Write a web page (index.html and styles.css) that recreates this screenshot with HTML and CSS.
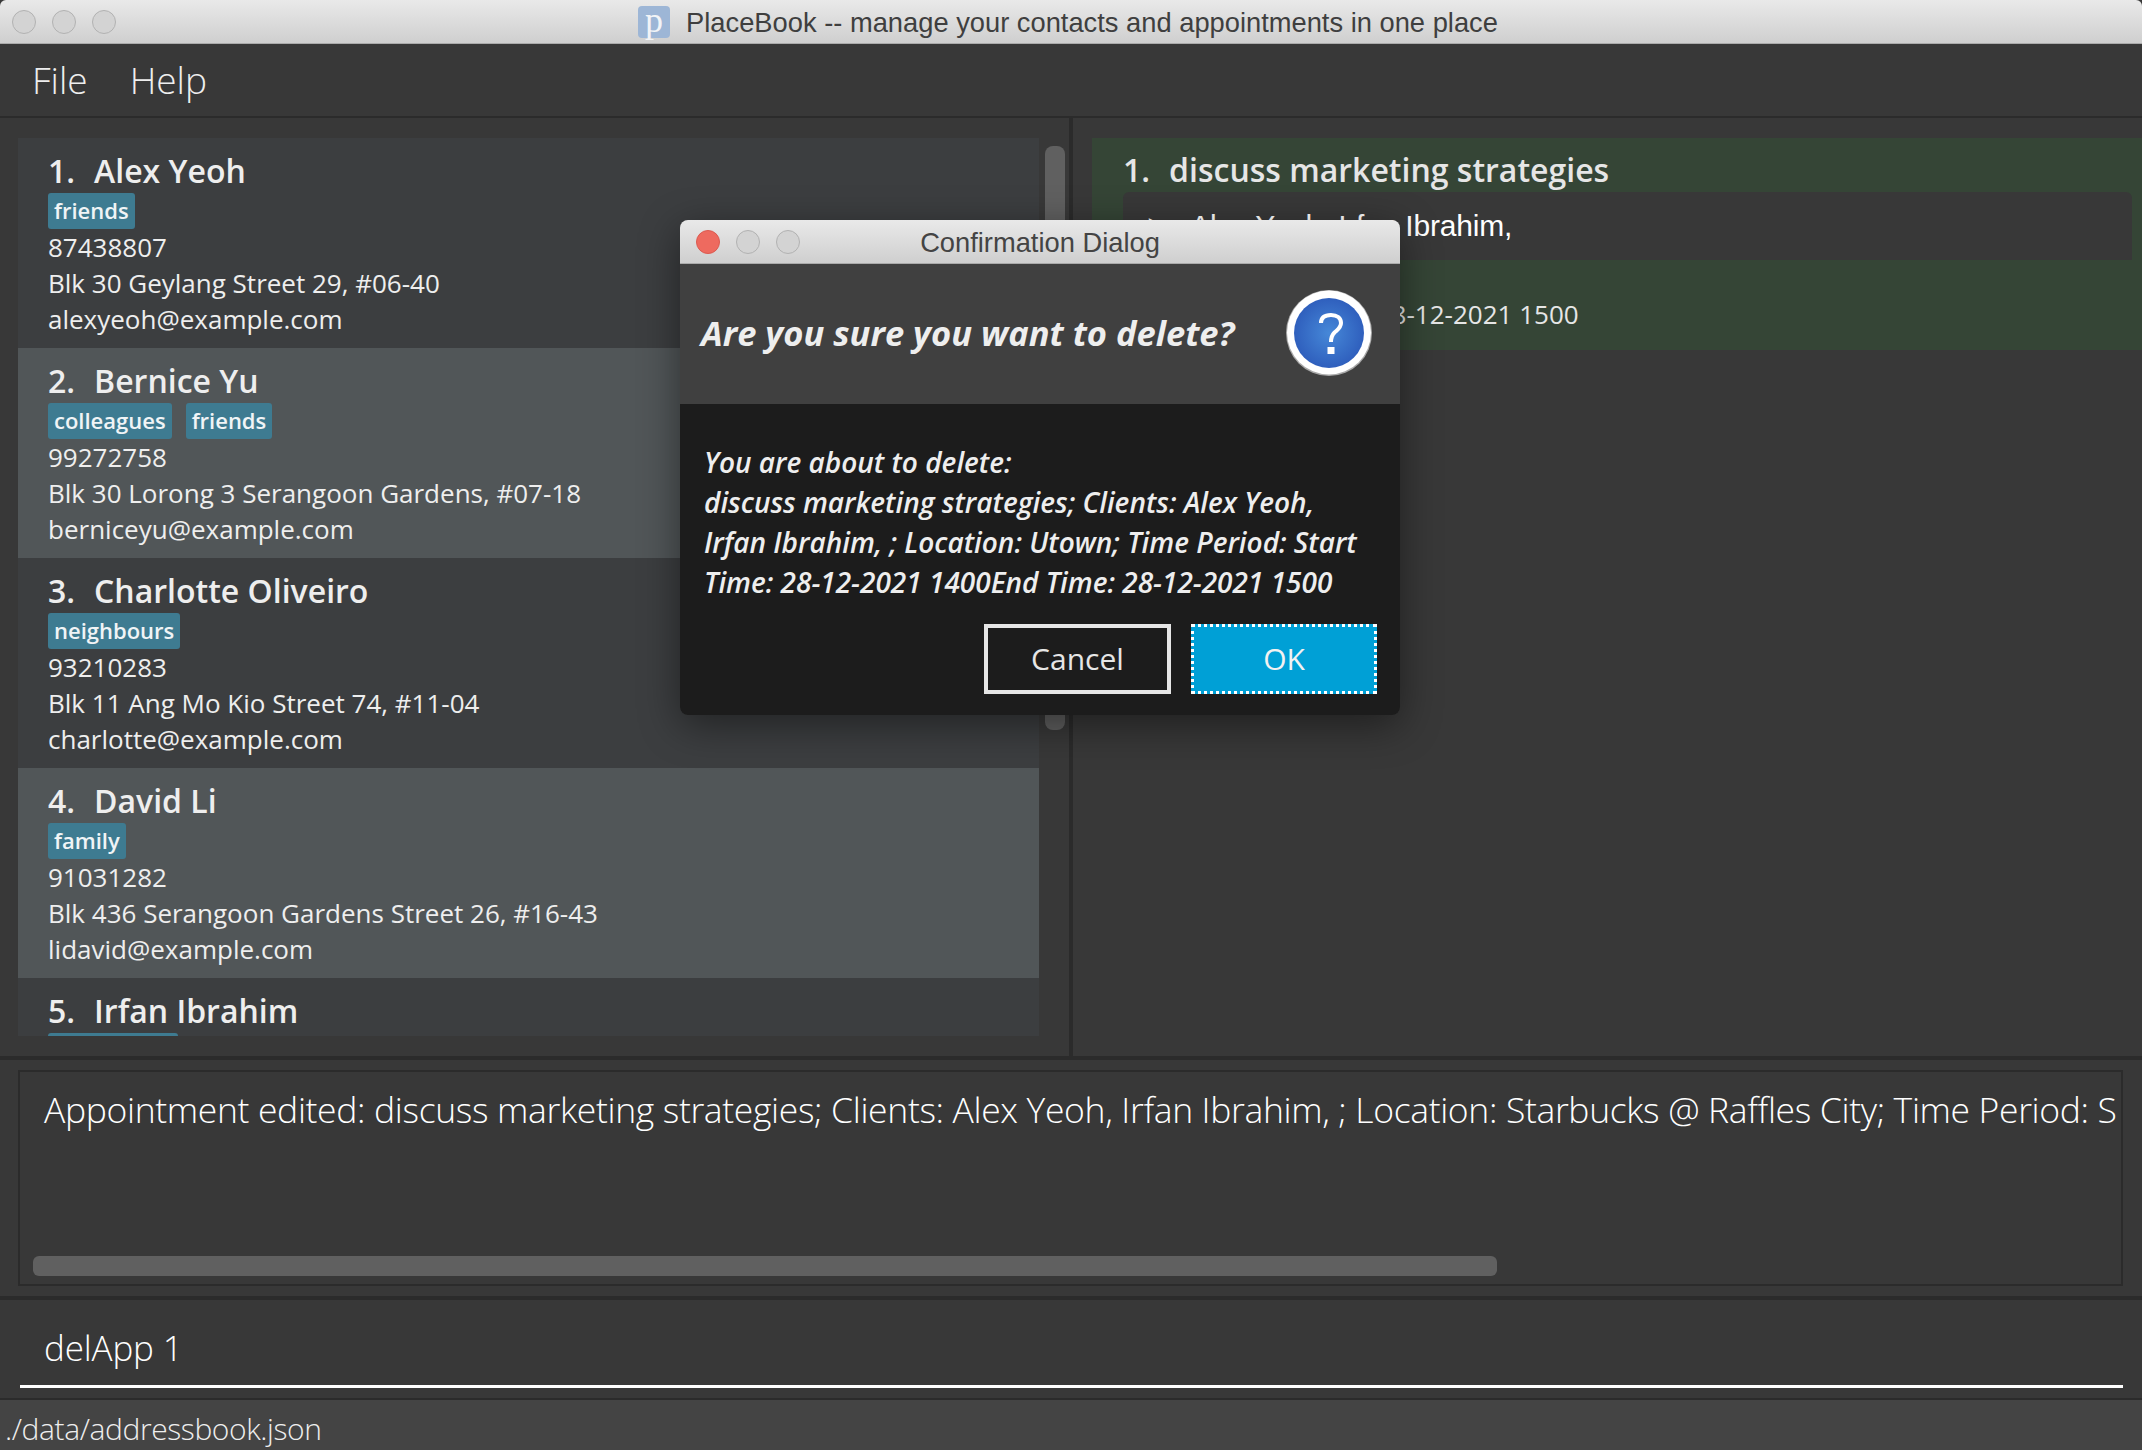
FILE: index.html
```html
<!DOCTYPE html>
<html lang="en">
<head>
<meta charset="utf-8">
<title>PlaceBook</title>
<link rel="stylesheet" href="styles.css">
</head>
<body>
<div class="window">
  <header class="titlebar">
    <div class="lights">
      <span class="light"></span><span class="light"></span><span class="light"></span>
    </div>
    <span class="app-icon">p</span>
    <span class="title-text">PlaceBook -- manage your contacts and appointments in one place</span>
  </header>
  <nav class="menubar"><span>File</span><span>Help</span></nav>
  <main class="split">
    <section class="left">
      <div class="list">
        <article class="card">
          <div class="name"><span class="index">1.</span>Alex Yeoh</div>
          <div class="tags"><span class="tag">friends</span></div>
          <div class="line">87438807</div>
          <div class="line">Blk 30 Geylang Street 29, #06-40</div>
          <div class="line">alexyeoh@example.com</div>
        </article>
        <article class="card alt">
          <div class="name"><span class="index">2.</span>Bernice Yu</div>
          <div class="tags"><span class="tag">colleagues</span><span class="tag">friends</span></div>
          <div class="line">99272758</div>
          <div class="line">Blk 30 Lorong 3 Serangoon Gardens, #07-18</div>
          <div class="line">berniceyu@example.com</div>
        </article>
        <article class="card">
          <div class="name"><span class="index">3.</span>Charlotte Oliveiro</div>
          <div class="tags"><span class="tag">neighbours</span></div>
          <div class="line">93210283</div>
          <div class="line">Blk 11 Ang Mo Kio Street 74, #11-04</div>
          <div class="line">charlotte@example.com</div>
        </article>
        <article class="card alt">
          <div class="name"><span class="index">4.</span>David Li</div>
          <div class="tags"><span class="tag">family</span></div>
          <div class="line">91031282</div>
          <div class="line">Blk 436 Serangoon Gardens Street 26, #16-43</div>
          <div class="line">lidavid@example.com</div>
        </article>
        <article class="card">
          <div class="name"><span class="index">5.</span>Irfan Ibrahim</div>
          <div class="tags"><span class="tag tag-clipped"></span></div>
        </article>
      </div>
      <div class="vscroll"></div>
    </section>
    <section class="right">
      <article class="appt">
        <div class="appt-title"><span class="index">1.</span>discuss marketing strategies</div>
        <div class="clients"><span class="chevron">&gt;</span><span>Alex Yeoh, Irfan Ibrahim,</span></div>
        <div class="appt-line">Utown</div>
        <div class="appt-line appt-time">28-12-2021 1400 - 28-12-2021 1500</div>
      </article>
    </section>
  </main>
  <section class="result-pane">
    <div class="result-box">
      <div class="result-text">Appointment edited: discuss marketing strategies; Clients: Alex Yeoh, Irfan Ibrahim, ; Location: Starbucks @ Raffles City; Time Period: Start Time: 28-12-2021 1400 End Time: 28-12-2021 1500</div>
      <div class="hscroll"></div>
    </div>
  </section>
  <section class="command"><div class="command-input">delApp 1</div></section>
  <footer class="status">./data/addressbook.json</footer>
</div>

<div class="dialog">
  <div class="dialog-bar">
    <div class="lights dialog-lights">
      <span class="light red"></span><span class="light"></span><span class="light"></span>
    </div>
    <span class="dialog-title">Confirmation Dialog</span>
  </div>
  <div class="dialog-head">
    <span class="dialog-question">Are you sure you want to delete?</span>
    <svg class="q-icon" viewBox="0 0 86 86" width="86" height="86" aria-hidden="true">
      <defs>
        <radialGradient id="qg" cx="50%" cy="50%" r="50%">
          <stop offset="0%" stop-color="#4688d8"/>
          <stop offset="100%" stop-color="#2f5fbd"/>
        </radialGradient>
      </defs>
      <circle cx="43" cy="43" r="43" fill="#a9a9a9"/>
      <circle cx="43" cy="42.500" r="42" fill="#fff"/>
      <circle cx="43" cy="43" r="35" fill="url(#qg)"/>
      <path d="M35 33C35 27 39 25 45 25C51 25 55 28 55 33C55 38 51 40 48.500 42.500C46 45 45 47 45 52" fill="none" stroke="#fff" stroke-width="4"/>
      <rect x="41.500" y="57" width="7" height="7" fill="#fff"/>
    </svg>
  </div>
  <div class="dialog-body">
    <p class="dialog-msg">You are about to delete:<br>discuss marketing strategies; Clients: Alex Yeoh,<br>Irfan Ibrahim, ; Location: Utown; Time Period: Start<br>Time: 28-12-2021 1400End Time: 28-12-2021 1500</p>
    <div class="dialog-actions">
      <button class="btn">Cancel</button>
      <button class="btn primary">OK</button>
    </div>
  </div>
</div>
</body>
</html>
```
FILE: styles.css
```css
* { box-sizing: border-box; }
html, body { margin: 0; height: 100%; }
body {
  background: #fff;
  overflow: hidden;
  font-family: "Open Sans", "Liberation Sans", sans-serif;
  color: #eee;
}
.window {
  width: 2142px;
  height: 1450px;
  display: flex;
  flex-direction: column;
  background: #383838;
}
.titlebar {
  position: relative;
  flex: 0 0 44px;
  display: flex;
  align-items: center;
  justify-content: center;
  gap: 16px;
  padding-right: 6px;
  background: linear-gradient(#e9e9e9, #cfcfcf);
  border-bottom: 1px solid #ababab;
  border-radius: 6px 6px 0 0;
  font-family: "Liberation Sans", sans-serif;
  color: #3f3f3f;
  font-size: 27.300px;
}
.title-text { padding-top: 2px; }
.lights {
  position: absolute;
  left: 12px;
  top: 10px;
  display: flex;
  gap: 16px;
}
.light {
  width: 24px;
  height: 24px;
  border-radius: 50%;
  border: 1px solid #b2b2b2;
  background: #d3d3d3;
}
.light.red { background: #ee6a5f; border-color: #dc5a50; }
.app-icon {
  width: 32px;
  height: 32px;
  border-radius: 4px;
  background: #9db6d6;
  color: #f2f4f7;
  font: 36px/28px "Liberation Serif", serif;
  text-align: center;
}
.menubar {
  flex: 0 0 74px;
  display: flex;
  align-items: center;
  gap: 42px;
  padding: 0 0 2px 32px;
  border-bottom: 2px solid #2b2b2b;
  font-size: 37px;
  font-weight: 300;
}
.split {
  flex: 0 0 942px;
  display: flex;
  border-bottom: 4px solid #2b2b2b;
}
.left {
  flex: 0 0 1073px;
  display: flex;
  align-items: flex-start;
  padding: 20px 4px 0 18px;
  border-right: 4px solid #2b2b2b;
}
.list {
  flex: 0 0 1021px;
  height: 898px;
  overflow: hidden;
}
.card {
  height: 210px;
  padding: 12px 30px 0;
  background: #3c3e40;
}
.card.alt { background: #515658; }
.name {
  font-size: 32px;
  line-height: 42px;
  font-weight: 600;
  color: #eee;
}
.index { margin-right: 19px; }
.tags {
  display: flex;
  gap: 14px;
  margin-top: 1px;
}
.tag {
  height: 36px;
  padding: 0 6px;
  border-radius: 3px;
  background: #3e7b91;
  color: #f0f4f6;
  font-size: 22px;
  font-weight: 600;
  line-height: 35px;
}
.tag-clipped { width: 130px; }
.line {
  font-size: 26px;
  line-height: 36px;
  color: #eee;
}
.vscroll {
  flex: 0 0 20px;
  height: 584px;
  margin: 8px 0 0 6px;
  border-radius: 8px;
  background: #606060;
}
.right {
  flex: 1;
  padding-top: 20px;
  padding-left: 19px;
}
.appt {
  height: 212px;
  padding: 11px 10px 0 31px;
  background: #354536;
}
.appt-title {
  font-size: 32px;
  line-height: 42px;
  font-weight: 600;
  color: #e6e6e6;
}
.clients {
  display: flex;
  align-items: center;
  gap: 24px;
  height: 68px;
  margin-top: 1px;
  padding: 0 0 0 24px;
  border-radius: 6px 6px 0 0;
  background: #383838;
  font-family: "Liberation Sans", sans-serif;
  font-size: 30px;
  letter-spacing: -.2px;
  color: #fff;
}
.chevron {
  font-family: "Open Sans", sans-serif;
  font-size: 34px;
  font-weight: 300;
}
.appt-line {
  font-size: 26px;
  line-height: 36px;
  color: #e6e6e6;
}
.appt-time { padding-left: 30px; }
.result-pane {
  flex: 0 0 240px;
  padding: 10px 19px 10px 18px;
  border-bottom: 4px solid #2b2b2b;
}
.result-box {
  height: 100%;
  display: flex;
  flex-direction: column;
  justify-content: space-between;
  padding: 14px 5px 8px 13px;
  border: 2px solid #2b2b2b;
  overflow: hidden;
}
.result-text {
  padding-left: 11px;
  font-size: 35.500px;
  font-weight: 300;
  letter-spacing: -.35px;
  line-height: 46px;
  color: #fff;
  white-space: nowrap;
  overflow: hidden;
}
.hscroll {
  width: 1464px;
  height: 20px;
  border-radius: 6px;
  background: #606060;
}
.command {
  flex: 0 0 100px;
  padding: 0 19px 10px 20px;
  border-bottom: 2px solid #2b2b2b;
}
.command-input {
  height: 88px;
  padding: 23px 0 0 24px;
  border-bottom: 3px solid #fff;
  font-size: 35px;
  font-weight: 300;
  letter-spacing: -.15px;
  line-height: 50px;
  color: #fff;
}
.status {
  flex: 1;
  padding: 6px 0 0 5px;
  background: #444;
  font-size: 30px;
  font-weight: 300;
  letter-spacing: -.4px;
  line-height: 46px;
  color: #eee;
}
.dialog {
  position: absolute;
  left: 680px;
  top: 220px;
  width: 720px;
  height: 495px;
  display: flex;
  flex-direction: column;
  border-radius: 8px;
  box-shadow: 0 10px 40px rgba(0, 0, 0, .45);
}
.dialog-bar {
  position: relative;
  flex: 0 0 44px;
  display: flex;
  align-items: center;
  justify-content: center;
  background: linear-gradient(#e9e9e9, #cfcfcf);
  border-bottom: 1px solid #ababab;
  border-radius: 8px 8px 0 0;
  font-family: "Liberation Sans", sans-serif;
  color: #444;
  font-size: 27.300px;
}
.dialog-title { padding-top: 2px; }
.dialog-lights { left: 16px; }
.dialog-head {
  flex: 0 0 140px;
  display: flex;
  align-items: center;
  justify-content: space-between;
  padding: 0 28px 2px 21px;
  background: #404040;
}
.dialog-question {
  padding-bottom: 2px;
  font-size: 34.500px;
  font-weight: 700;
  font-style: italic;
  color: #eee;
}
.dialog-body {
  flex: 1;
  display: flex;
  flex-direction: column;
  padding: 38px 23px 21px 24px;
  background: #1c1c1c;
  border-radius: 0 0 8px 8px;
}
.dialog-msg {
  margin: 0;
  font-size: 28px;
  font-weight: 600;
  font-style: italic;
  line-height: 40px;
  color: #eee;
}
.dialog-actions {
  margin-top: auto;
  display: flex;
  justify-content: flex-end;
  gap: 20px;
}
.btn {
  width: 187px;
  height: 70px;
  padding: 0 0 2px;
  border: 4px solid #e6e6e6;
  background: #1c1c1c;
  font-family: "Open Sans", sans-serif;
  font-size: 30px;
  color: #e6e6e6;
}
.btn.primary {
  width: 186px;
  border: 3px dotted #fff;
  background: #00a0d6;
  color: #f2f2f2;
}
```
